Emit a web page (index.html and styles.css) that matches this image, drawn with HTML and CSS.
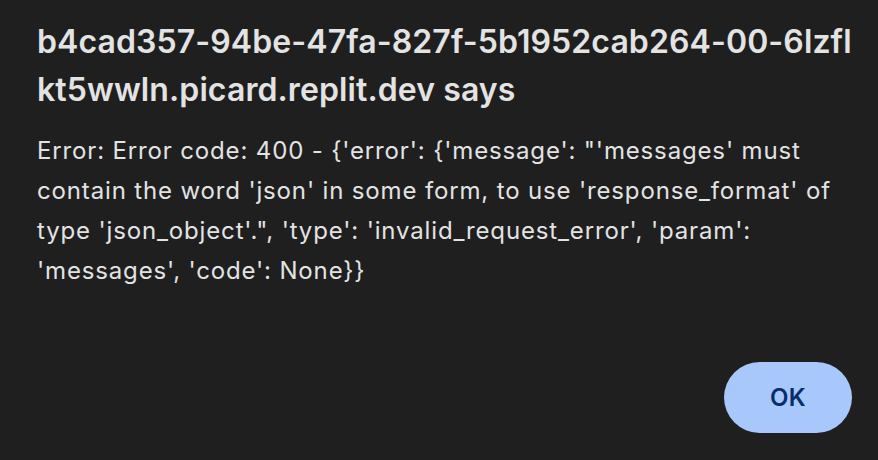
FILE: index.html
```html
<!DOCTYPE html>
<html lang="en">
<head>
<meta charset="utf-8">
<link rel="stylesheet" href="styles.css">
</head>
<body>
<div class="dialog">
  <h1 class="title">b4cad357-94be-47fa-827f-5b1952cab264-00-6lzflkt5wwln.picard.replit.dev says</h1>
  <p class="message">Error: Error code: 400 - {'error': {'message': "'messages' must contain the word 'json' in some form, to use 'response_format' of type 'json_object'.", 'type': 'invalid_request_error', 'param': 'messages', 'code': None}}</p>
  <div class="actions">
    <button class="ok">OK</button>
  </div>
</div>
</body>
</html>
```
FILE: styles.css
```css
html, body {
  margin: 0;
  padding: 0;
  background: #1f1f1f;
  width: 878px;
  height: 460px;
  overflow: hidden;
}
.dialog {
  padding: 18px 26px 0 37px;
  font-family: Inter, "Noto Sans", sans-serif;
  color: #e3e3e3;
}
.title {
  margin: 0;
  font-size: 32px;
  font-weight: 600;
  line-height: 48px;
  letter-spacing: 0.1px;
  word-break: break-all;
}
.message {
  margin: 17px 0 0;
  font-size: 24px;
  line-height: 40px;
  letter-spacing: 0.85px;
}
.actions {
  display: flex;
  justify-content: flex-end;
  margin-top: 71px;
}
.ok {
  width: 128px;
  height: 71px;
  border: none;
  border-radius: 36px;
  background: #a8c7fa;
  color: #062e6f;
  font-family: Inter, "Noto Sans", sans-serif;
  font-size: 24px;
  font-weight: 600;
  letter-spacing: 0.3px;
}
```
